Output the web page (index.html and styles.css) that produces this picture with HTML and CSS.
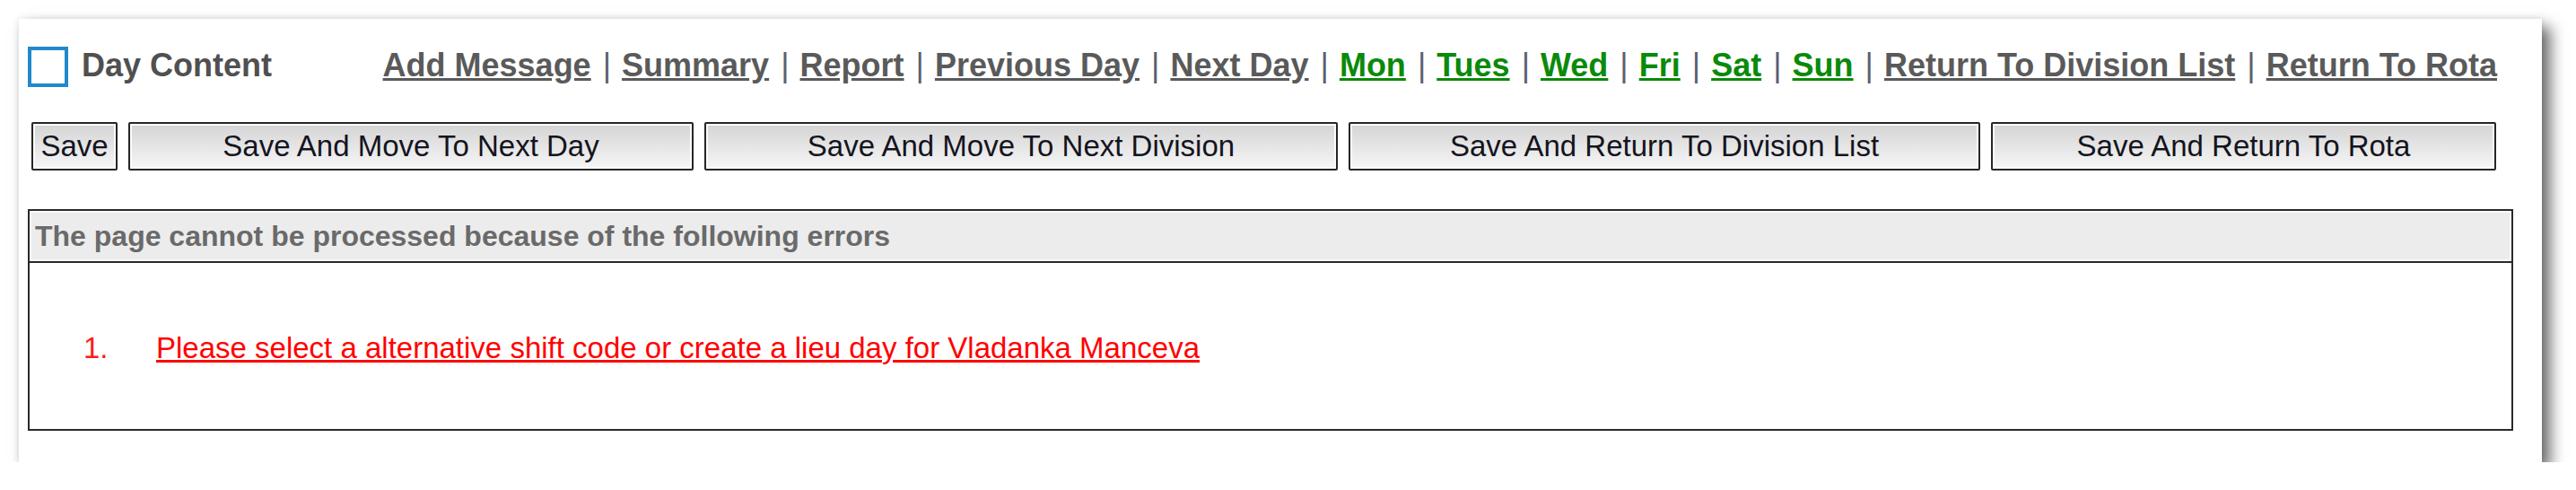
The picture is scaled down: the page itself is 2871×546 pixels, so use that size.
FILE: index.html
```html
<!DOCTYPE html>
<html lang="en">
<head>
    <meta charset="UTF-8">
    <meta name="viewport" content="width=device-width, initial-scale=1.0">
    <title>Day Content</title>
    <link rel="stylesheet" href="styles.css">
</head>
<body>
    <div class="panel">
        <div class="top-bar">
            <div class="title">
                <span class="check"></span>
                <span>Day Content</span>
            </div>
            <div class="nav">
                <a href="#">Add Message</a> <span class="sep">|</span>
                <a href="#">Summary</a> <span class="sep">|</span>
                <a href="#">Report</a> <span class="sep">|</span>
                <a href="#">Previous Day</a> <span class="sep">|</span>
                <a href="#">Next Day</a> <span class="sep">|</span>
                <a href="#" class="day">Mon</a> <span class="sep">|</span>
                <a href="#" class="day">Tues</a> <span class="sep">|</span>
                <a href="#" class="day">Wed</a> <span class="sep">|</span>
                <a href="#" class="day">Fri</a> <span class="sep">|</span>
                <a href="#" class="day">Sat</a> <span class="sep">|</span>
                <a href="#" class="day">Sun</a> <span class="sep">|</span>
                <a href="#">Return To Division List</a> <span class="sep">|</span>
                <a href="#">Return To Rota</a>
            </div>
        </div>

        <div class="actions">
            <button class="btn btn-save">Save</button>
            <button class="btn btn-day">Save And Move To Next Day</button>
            <button class="btn btn-division">Save And Move To Next Division</button>
            <button class="btn btn-list">Save And Return To Division List</button>
            <button class="btn btn-rota">Save And Return To Rota</button>
        </div>

        <div class="errors">
            <div class="errors-head">The page cannot be processed because of the following errors</div>
            <div class="errors-body">
                <div class="error-item">
                    <span class="num">1.</span>
                    <a href="#">Please select a alternative shift code or create a lieu day for Vladanka Manceva</a>
                </div>
            </div>
        </div>
    </div>
</body>
</html>
```

FILE: styles.css
```css
body {
    margin: 0;
    background-color: #ffffff;
    font-family: 'Liberation Sans', Arial, sans-serif;
}
.panel {
    width: 2812px;
    box-sizing: border-box;
    margin: 21px 0 0 21px;
    padding: 31px 32px 35px 10px;
    background-color: white;
    box-shadow: 9px 9px 16px rgba(0, 0, 0, 0.6), 0px 0px 8px rgba(0, 0, 0, 0.08);
}

/* header row */
.top-bar {
    display: flex;
    justify-content: space-between;
    align-items: center;
    height: 45px;
    margin-right: 18px;
}
.title {
    display: flex;
    align-items: center;
    gap: 15px;
    font-size: 36px;
    font-weight: bold;
    color: #505050;
    line-height: 41px;
}
.title span:last-child {
    margin-bottom: 4px;
}
.check {
    width: 45px;
    height: 45px;
    box-sizing: border-box;
    border: 4px solid #2189cb;
}
.nav {
    font-size: 36px;
    font-weight: bold;
    line-height: 41px;
    margin-bottom: 4px;
    color: #5a5a5a;
    white-space: nowrap;
}
.nav a {
    color: #5a5a5a;
}
.nav a.day {
    color: #0a8a0a;
}
.nav .sep {
    color: #5a6070;
    font-weight: normal;
    margin: 0 2px 0 3px;
}

/* buttons */
.actions {
    display: flex;
    gap: 12px;
    margin: 39px 0 0 4px;
}
.btn {
    height: 54px;
    padding: 0;
    box-sizing: border-box;
    border: 2px solid #262626;
    border-radius: 2px;
    background: linear-gradient(to bottom, #d4d4d4, #ececec 70%, #f6f6f6);
    box-shadow: inset 0px 0px 0px 2px #fbfbfb;
    font-family: 'Liberation Sans', Arial, sans-serif;
    font-size: 33px;
    color: #141420;
    cursor: pointer;
}
.btn-save {
    width: 96px;
}
.btn-day {
    width: 630px;
}
.btn-division {
    width: 706px;
}
.btn-list {
    width: 704px;
}
.btn-rota {
    width: 563px;
}

/* error box */
.errors {
    margin-top: 43px;
    border: 2px solid #2a2a2a;
}
.errors-head {
    height: 56px;
    display: flex;
    align-items: center;
    padding-left: 6px;
    background-color: #ececec;
    box-shadow: inset 0px 0px 0px 2px #fafafa;
    border-bottom: 2px solid #2a2a2a;
    font-size: 32px;
    font-weight: bold;
    color: #6a6a6a;
}
.errors-body {
    height: 185px;
    box-sizing: border-box;
    padding-top: 4px;
    display: flex;
    align-items: center;
}
.error-item {
    display: flex;
    font-size: 33px;
    color: #ff1a1a;
}
.error-item .num {
    width: 81px;
    padding-left: 60px;
}
.error-item a {
    color: #ff0000;
}
```
